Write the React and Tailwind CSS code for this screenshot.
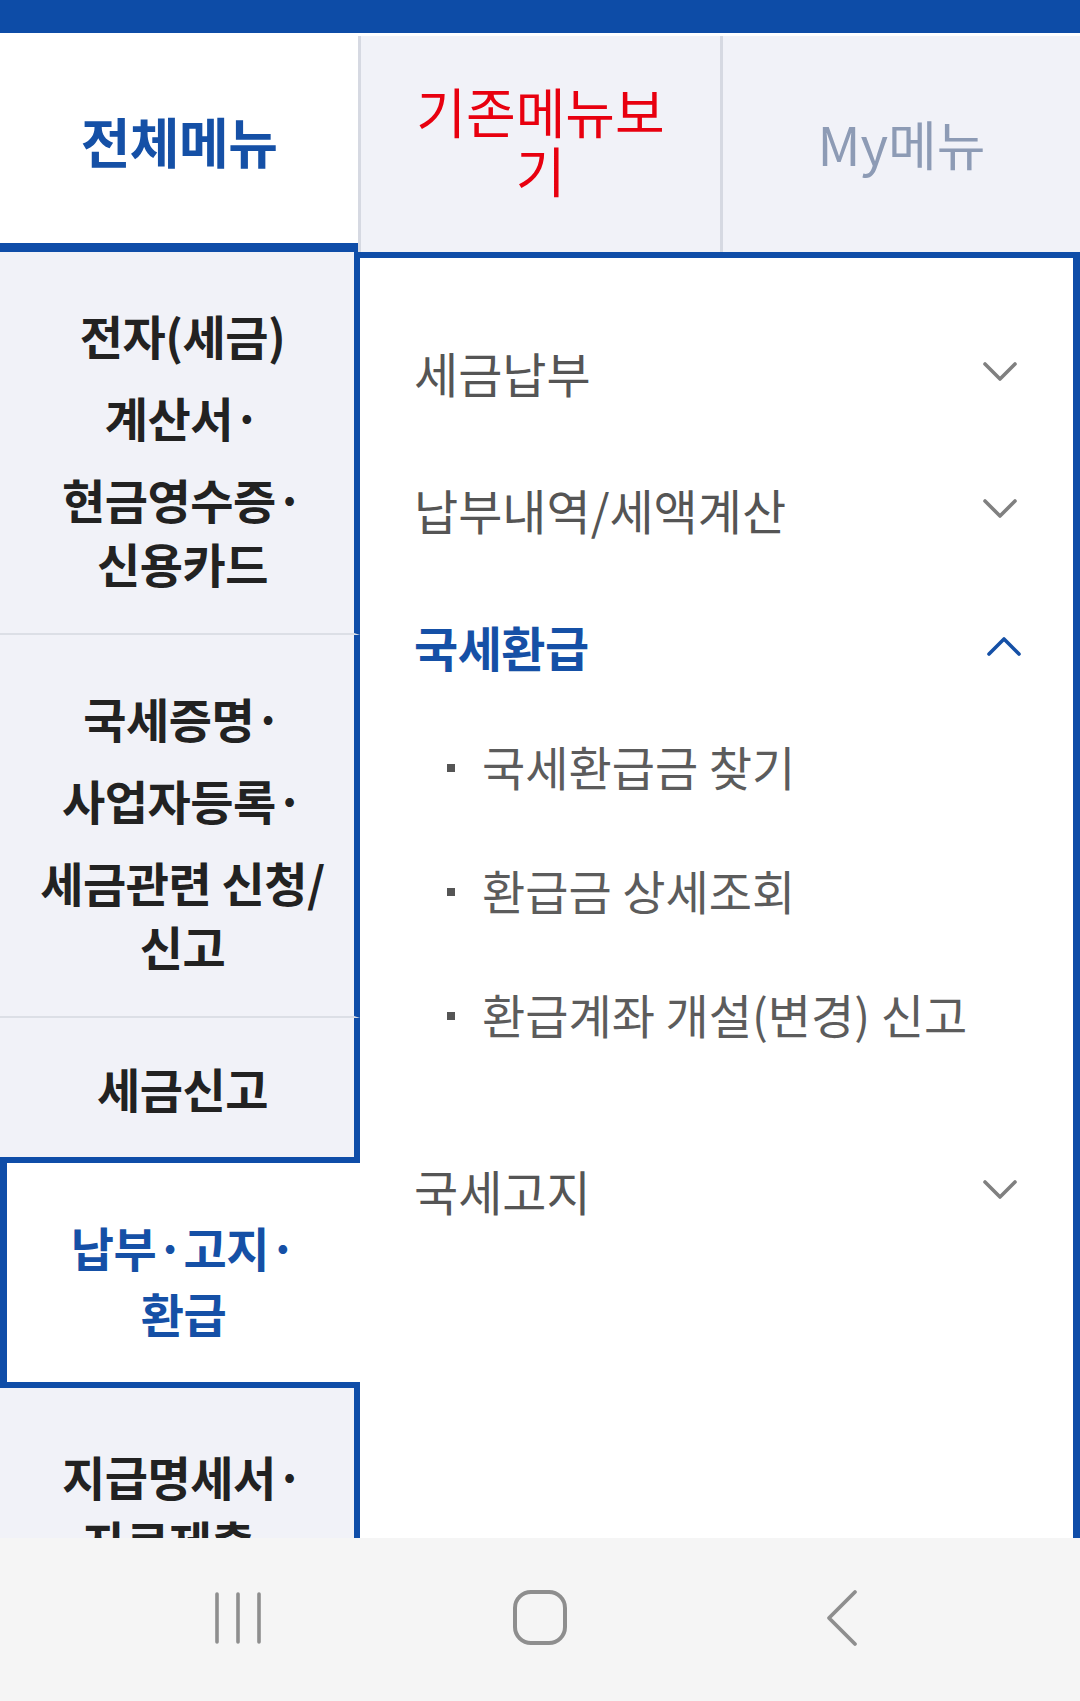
function Chevron({ up = false, color = '#808080' }) {
  return (
    <svg width="34" height="20" viewBox="0 0 34 20" fill="none">
      <polyline
        points={up ? '2,18 17,3 32,18' : '2,2 17,17 32,2'}
        stroke={color}
        strokeWidth="3.6"
        strokeLinecap="round"
        strokeLinejoin="round"
      />
    </svg>
  );
}

function LeftItem({ groups, className, textClass, leading }) {
  return (
    <div className={className}>
      <div className="flex flex-col items-center gap-[18px]">
        {groups.map((g, i) => (
          <div key={i} className="flex flex-col items-center">
            {g.map((line) => (
              <div key={line} className={`${leading} whitespace-nowrap ${textClass}`}>
                {line}
              </div>
            ))}
          </div>
        ))}
      </div>
    </div>
  );
}

function TopRow({ label, active, up }) {
  return (
    <div className="h-[137px] flex items-center justify-between">
      <span
        className={
          active
            ? 'text-[48px] font-bold text-[#1550a6] tracking-[-0.5px]'
            : 'text-[48px] text-[#555555]'
        }
      >
        {label}
      </span>
      <span className={up ? 'mr-[-4px]' : ''}>
        <Chevron up={up} color={up ? '#1550a6' : '#808080'} />
      </span>
    </div>
  );
}

function SubRow({ label }) {
  return (
    <div className="h-[124px] flex items-center pl-[33px]">
      <span className="w-[8px] h-[8px] bg-[#555555] mr-[27px] mt-[4px] shrink-0"></span>
      <span className="text-[47px] text-[#5c5c5c] whitespace-nowrap">{label}</span>
    </div>
  );
}

export default function App() {
  return (
    <div
      className="w-[1080px] h-[1701px] flex flex-col overflow-hidden bg-white"
      style={{ fontFamily: '"Noto Sans CJK KR", "Noto Sans", sans-serif' }}
    >
      {/* top bar */}
      <div className="h-[33px] bg-[#0d4ca7] shrink-0"></div>

      {/* tabs */}
      <div className="h-[219px] grid grid-cols-[358px_362px_360px] shrink-0">
        <div className="bg-white border-b-[9px] border-[#0f4da8] flex items-center justify-center pt-[4px]">
          <span className="text-[54px] font-bold text-[#1550a6] tracking-[-0.5px]">전체메뉴</span>
        </div>
        <div className="mt-[3px] bg-[#f1f2f8] border-l-[3px] border-[#d6d9e2] flex items-center justify-center pb-[8px]">
          <span className="w-[290px] text-center text-[54px] leading-[59px] text-[#e8000f]">기존메뉴보기</span>
        </div>
        <div className="mt-[3px] bg-[#f1f2f8] border-l-[3px] border-[#d6d9e2] flex items-center justify-center">
          <span className="text-[53px] text-[#8d9bb5]">My메뉴</span>
        </div>
      </div>

      {/* body */}
      <div className="flex-1 flex overflow-hidden">
        <div className="w-[360px] shrink-0 flex flex-col bg-[#f1f2f8]">
          <LeftItem
            className="h-[383px] shrink-0 border-b-2 border-b-[#dcdfe6] border-r-[6px] border-r-[#0f4da8] flex items-center justify-center pt-[13px] pl-[11px]"
            groups={[['전자(세금)'], ['계산서·'], ['현금영수증·', '신용카드']]}
            textClass="text-[47px] font-bold text-[#222222] tracking-[-0.5px]"
            leading="leading-[64px]"
          />
          <LeftItem
            className="h-[383px] shrink-0 border-b-2 border-b-[#dcdfe6] border-r-[6px] border-r-[#0f4da8] flex items-center justify-center pt-[13px] pl-[11px]"
            groups={[['국세증명·'], ['사업자등록·'], ['세금관련 신청/', '신고']]}
            textClass="text-[47px] font-bold text-[#222222] tracking-[-0.5px]"
            leading="leading-[64px]"
          />
          <LeftItem
            className="h-[139px] shrink-0 border-r-[6px] border-r-[#0f4da8] flex items-center justify-center pl-[11px]"
            groups={[['세금신고']]}
            textClass="text-[47px] font-bold text-[#222222] tracking-[-0.5px]"
            leading="leading-[64px]"
          />
          <LeftItem
            className="h-[231px] shrink-0 bg-white border-y-[6px] border-l-[7px] border-[#0f4da8] flex items-center justify-center pt-[14px]"
            groups={[['납부·고지·', '환급']]}
            textClass="text-[47px] font-bold text-[#1550a6] tracking-[-0.5px]"
            leading="leading-[66px]"
          />
          <LeftItem
            className="flex-1 border-r-[6px] border-r-[#0f4da8] flex justify-center pt-[55px] pl-[11px]"
            groups={[['지급명세서·', '자료제출·', '공익법인']]}
            textClass="text-[47px] font-bold text-[#222222] tracking-[-0.5px]"
            leading="leading-[65px]"
          />
        </div>

        <div className="flex-1 bg-white border-t-[6px] border-r-[7px] border-[#0f4da8] pl-[54px] pr-[56px] pt-[45px]">
          <TopRow label="세금납부" />
          <TopRow label="납부내역/세액계산" />
          <TopRow label="국세환급" active up />
          <div className="-mt-[10px] mb-[45px]">
            <SubRow label="국세환급금 찾기" />
            <SubRow label="환급금 상세조회" />
            <SubRow label="환급계좌 개설(변경) 신고" />
          </div>
          <TopRow label="국세고지" />
        </div>
      </div>

      {/* android nav bar */}
      <div className="h-[163px] shrink-0 bg-[#f5f5f5] flex items-center justify-center gap-[202px] pb-[4px]">
        <div className="w-[100px] flex justify-center">
          <svg width="50" height="54" viewBox="0 0 50 54" fill="none" stroke="#8e8e8e" strokeWidth="3.6" strokeLinecap="round">
            <line x1="4" y1="3" x2="4" y2="51" />
            <line x1="25" y1="3" x2="25" y2="51" />
            <line x1="46" y1="3" x2="46" y2="51" />
          </svg>
        </div>
        <div className="w-[100px] flex justify-center">
          <svg width="56" height="57" viewBox="0 0 56 57" fill="none">
            <rect x="3" y="3" width="50" height="51" rx="16" stroke="#8e8e8e" strokeWidth="4" />
          </svg>
        </div>
        <div className="w-[100px] flex justify-center">
          <svg width="34" height="58" viewBox="0 0 34 58" fill="none">
            <polyline points="30,3 4,29 30,55" stroke="#8e8e8e" strokeWidth="3.8" strokeLinecap="round" strokeLinejoin="round" />
          </svg>
        </div>
      </div>
    </div>
  );
}
